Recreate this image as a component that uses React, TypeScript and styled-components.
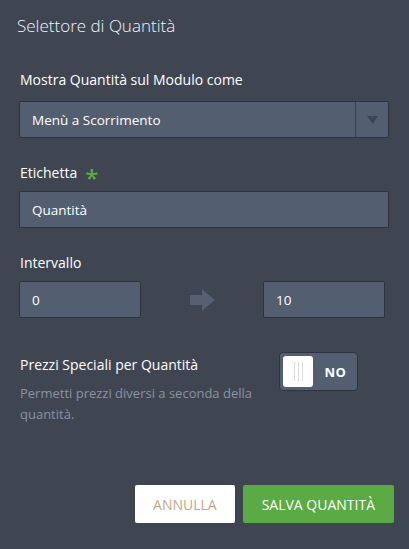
import React from "react"
import styled, { createGlobalStyle } from "styled-components"

const GlobalStyle = createGlobalStyle({
  "html, body": {
    margin: 0,
    padding: 0,
    background: "#3f4652",
  },
  body: {
    fontFamily: "'Open Sans', 'Liberation Sans', sans-serif",
    color: "#ffffff",
  },
})

const Panel = styled.div({
  width: "409px",
  height: "549px",
  boxSizing: "border-box",
  background: "#3f4652",
  padding: "12px 20px 0 19px",
  display: "flex",
  flexDirection: "column",
})

const Title = styled.h1({
  margin: "0 0 0 -2px",
  fontSize: "17px",
  fontWeight: 300,
  lineHeight: "28px",
  color: "#f2f4f7",
})

const Field = styled.div<{ $top: number }>(({ $top }) => ({
  marginTop: `${$top}px`,
  display: "flex",
  flexDirection: "column",
}))

const Label = styled.label<{ $gap: number }>(({ $gap }) => ({
  fontSize: "14px",
  lineHeight: "20px",
  paddingLeft: "1px",
  marginBottom: `${$gap}px`,
  color: "#ffffff",
  display: "flex",
  alignItems: "center",
  gap: "8px",
}))

const Required = styled.span({
  color: "#5aab43",
  fontSize: "24px",
  fontWeight: 600,
  lineHeight: "20px",
  position: "relative",
  top: "5px",
})

const Box = styled.div<{ $width?: string }>(({ $width }) => ({
  width: $width ?? "370px",
  height: "37px",
  boxSizing: "border-box",
  background: "#535e70",
  border: "1px solid #2e343d",
  borderRadius: "2px",
  display: "flex",
  alignItems: "center",
  fontSize: "13.5px",
  color: "#ffffff",
}))

const BoxText = styled.span({
  flex: 1,
  paddingLeft: "12px",
})

const SelectButton = styled.div({
  width: "32px",
  alignSelf: "stretch",
  borderLeft: "1px solid #3a414d",
  display: "flex",
  alignItems: "center",
  justifyContent: "center",
})

const RangeRow = styled.div({
  display: "flex",
  alignItems: "center",
  width: "366px",
  justifyContent: "space-between",
})

const Toggles = styled.div({
  marginTop: "34px",
  display: "flex",
  alignItems: "flex-start",
  justifyContent: "space-between",
  width: "339px",
})

const ToggleInfo = styled.div({
  width: "245px",
  paddingLeft: "1px",
  paddingTop: "3px",
})

const ToggleTitle = styled.div({
  fontSize: "14px",
  lineHeight: "20px",
})

const ToggleDesc = styled.div({
  fontSize: "13px",
  lineHeight: "21px",
  color: "#8a93a1",
  marginTop: "8px",
})

const Switch = styled.div({
  width: "79px",
  height: "39px",
  boxSizing: "border-box",
  background: "#535e70",
  border: "1px solid #2e343d",
  borderRadius: "4px",
  padding: "3px",
  display: "flex",
  alignItems: "center",
})

const Knob = styled.div({
  width: "30px",
  height: "31px",
  background: "#ffffff",
  borderRadius: "3px",
  display: "flex",
  alignItems: "center",
  justifyContent: "center",
  gap: "3px",
})

const Grip = styled.span({
  width: "1px",
  height: "19px",
  background: "#dcdcdc",
})

const SwitchText = styled.span({
  flex: 1,
  textAlign: "center",
  fontWeight: 700,
  fontSize: "13px",
  letterSpacing: "0.5px",
  paddingLeft: "4px",
})

const Footer = styled.div({
  marginTop: "auto",
  marginBottom: "26px",
  marginRight: "-5px",
  display: "flex",
  justifyContent: "flex-end",
  gap: "8px",
})

const Button = styled.button<{ $primary?: boolean }>(({ $primary }) => ({
  height: "38px",
  border: "none",
  borderRadius: "2px",
  padding: $primary ? "0 19px" : "0 18px",
  fontFamily: "'Open Sans', 'Liberation Sans', sans-serif",
  fontSize: "14px",
  background: $primary ? "#5aab43" : "#ffffff",
  color: $primary ? "#ffffff" : "#c0a98a",
  cursor: "pointer",
}))

const ArrowDown = () => (
  <svg width="11" height="8" viewBox="0 0 11 8">
    <path d="M0 0 H11 L5.5 8 Z" fill="#3d4552" />
  </svg>
)

const ArrowRight = () => (
  <svg width="25" height="22" viewBox="0 0 25 22">
    <path d="M0 6 H12 V0 L25 11 L12 22 V16 H0 Z" fill="#566070" />
  </svg>
)

const App: React.FC = () => (
  <>
    <GlobalStyle />
    <Panel>
      <Title>Selettore di Quantità</Title>

      <Field $top={30}>
        <Label $gap={11}>Mostra Quantità sul Modulo come</Label>
        <Box>
          <BoxText>Menù a Scorrimento</BoxText>
          <SelectButton>
            <ArrowDown />
          </SelectButton>
        </Box>
      </Field>

      <Field $top={25}>
        <Label $gap={8}>
          Etichetta <Required>*</Required>
        </Label>
        <Box>
          <BoxText>Quantità</BoxText>
        </Box>
      </Field>

      <Field $top={25}>
        <Label $gap={8}>Intervallo</Label>
        <RangeRow>
          <Box $width="122px">
            <BoxText>0</BoxText>
          </Box>
          <ArrowRight />
          <Box $width="122px">
            <BoxText>10</BoxText>
          </Box>
        </RangeRow>
      </Field>

      <Toggles>
        <ToggleInfo>
          <ToggleTitle>Prezzi Speciali per Quantità</ToggleTitle>
          <ToggleDesc>Permetti prezzi diversi a seconda della quantità.</ToggleDesc>
        </ToggleInfo>
        <Switch>
          <Knob>
            <Grip />
            <Grip />
            <Grip />
          </Knob>
          <SwitchText>NO</SwitchText>
        </Switch>
      </Toggles>

      <Footer>
        <Button>ANNULLA</Button>
        <Button $primary>SALVA QUANTITÀ</Button>
      </Footer>
    </Panel>
  </>
)

export default App
